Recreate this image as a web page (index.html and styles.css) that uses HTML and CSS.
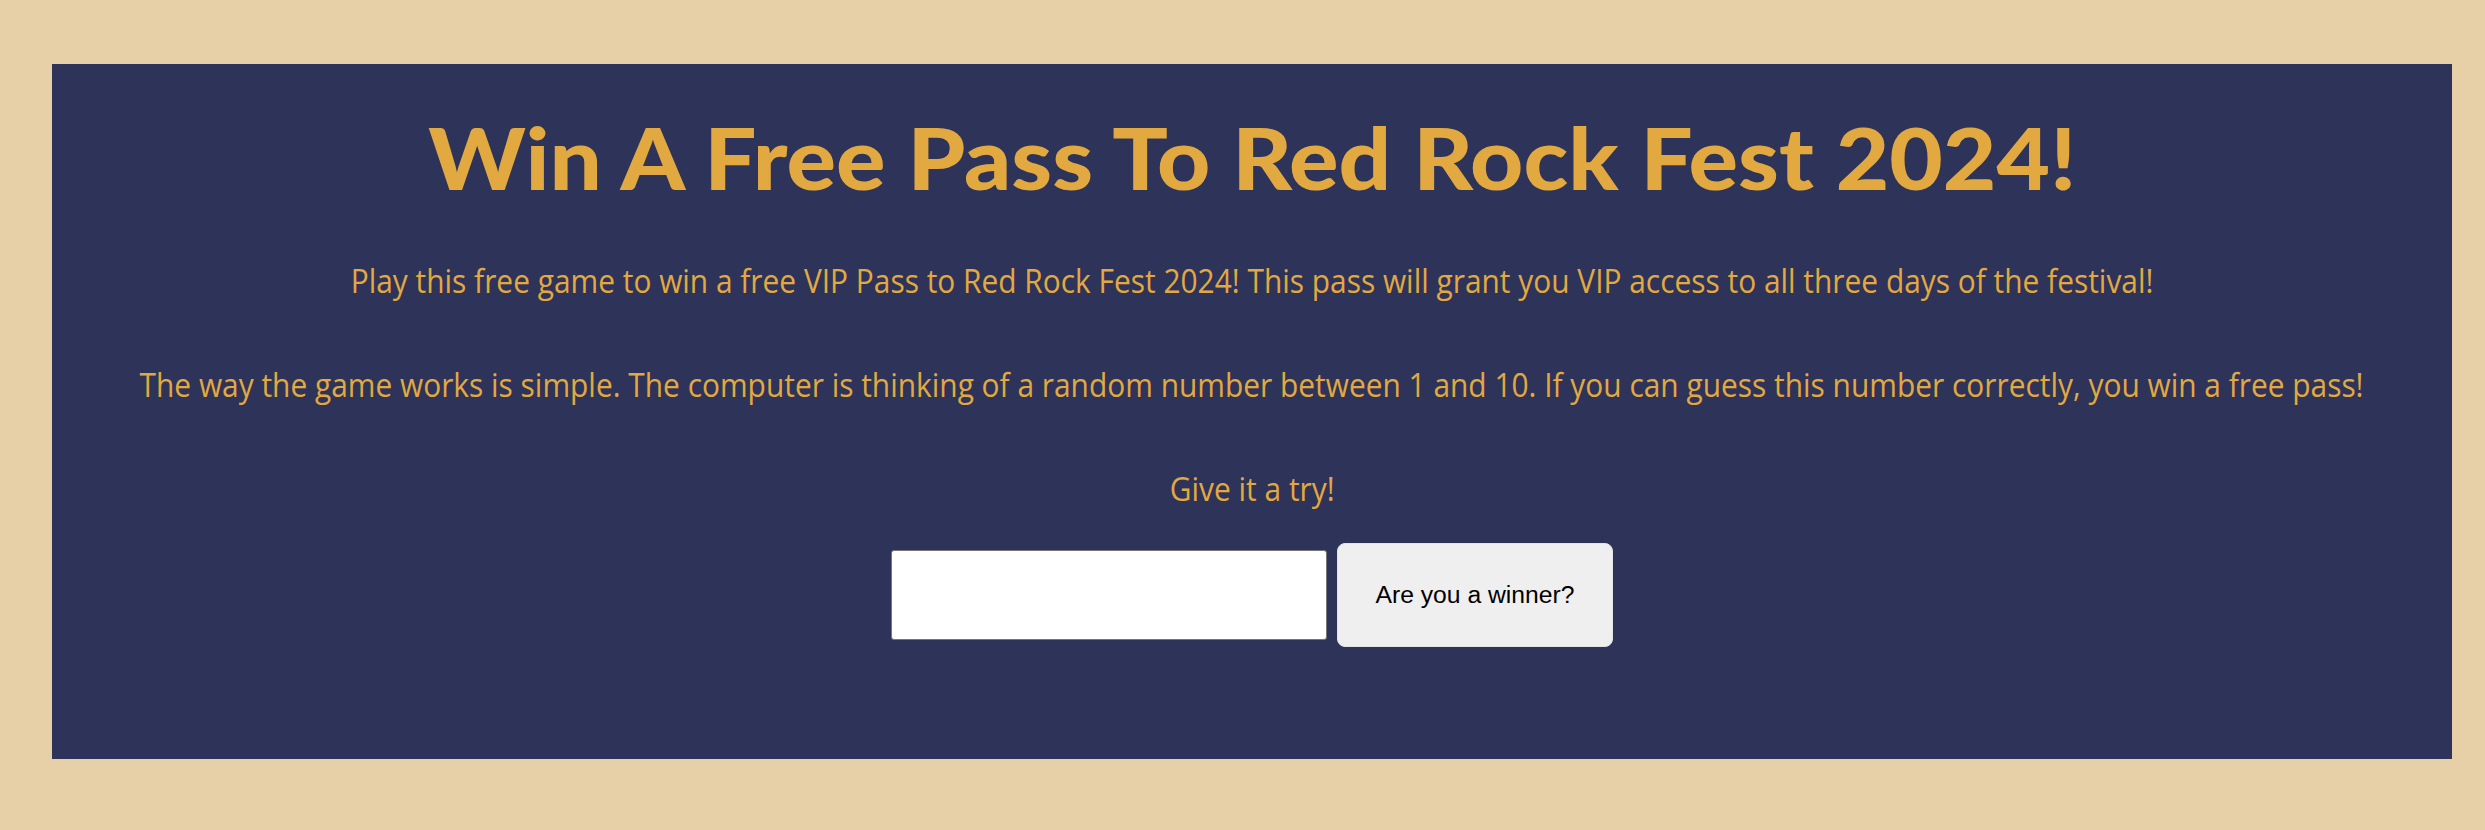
FILE: index.html
```html
<!DOCTYPE html>
<html lang="en">
<head>
<meta charset="utf-8">
<title>Red Rock Fest 2024</title>
<link rel="stylesheet" href="styles.css">
</head>
<body>
<main class="panel">
  <h1 class="title"><span class="sq sq-title">Win A Free Pass To Red Rock Fest 2024!</span></h1>
  <p class="copy"><span class="sq sq-copy">Play this free game to win a free VIP Pass to Red Rock Fest 2024! This pass will grant you VIP access to all three days of the festival!</span></p>
  <p class="copy copy-gap"><span class="sq sq-copy">The way the game works is simple. The computer is thinking of a random number between 1 and 10. If you can guess this number correctly, you win a free pass!</span></p>
  <p class="copy copy-gap"><span class="sq sq-copy">Give it a try!</span></p>
  <form class="guess" onsubmit="return false">
    <input class="guess-input" type="text" aria-label="Your guess">
    <button class="guess-btn" type="submit">Are you a winner?</button>
  </form>
</main>
</body>
</html>
```
FILE: styles.css
```css
html, body {
  margin: 0;
  padding: 0;
}
body {
  background: #e7d0a7;
  width: 2485px;
  height: 830px;
  overflow: hidden;
}
.panel {
  box-sizing: border-box;
  width: 2400px;
  margin: 64px 0 0 52px;
  padding: 41px 0 112px;
  background: #2e3359;
  color: #e2a940;
}
.title {
  margin: 0;
  display: flex;
  justify-content: center;
  font-family: Lato, "Open Sans", sans-serif;
  font-weight: 900;
  font-size: 86px;
  line-height: 104px;
  white-space: nowrap;
}
.copy {
  margin: 52px 0 0;
  display: flex;
  justify-content: center;
  font-family: "Open Sans", "Noto Sans", sans-serif;
  font-size: 32px;
  line-height: 40px;
  white-space: nowrap;
}
.copy-gap {
  margin-top: 64px;
}
.sq {
  display: inline-block;
  transform-origin: center;
}
.sq-title { transform: scaleX(1.074); }
.sq-copy { transform: scaleX(0.934); }

.guess {
  margin: 34px 0 0;
  display: flex;
  justify-content: center;
  align-items: center;
  gap: 10px;
}
.guess-input {
  box-sizing: border-box;
  width: 436px;
  height: 90px;
  margin: 0;
  padding: 0 8px;
  border: 1px solid #767676;
  border-radius: 3px;
  background: #fff;
  font-size: 24px;
}
.guess-btn {
  box-sizing: border-box;
  width: 276px;
  height: 104px;
  margin: 0;
  padding: 0;
  border: 1px solid #e3e3e3;
  border-radius: 8px;
  background: #efefef;
  color: #000;
  font-family: "Liberation Sans", Arial, sans-serif;
  font-size: 24.7px;
  white-space: nowrap;
}
```
